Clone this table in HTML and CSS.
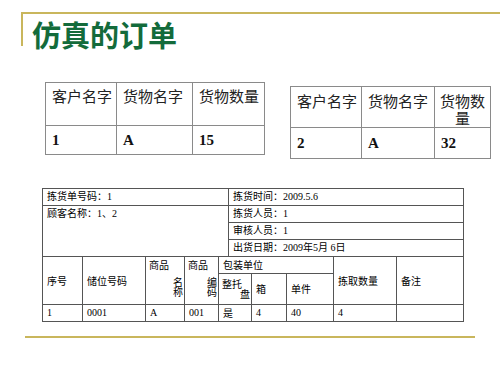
FILE: index.html
```html
<!DOCTYPE html>
<html lang="zh">
<head>
<meta charset="utf-8">
<link rel="stylesheet" href="styles.css">
</head>
<body>
<div class="slide">
  <header class="title-bar"><h1>仿真的订单</h1></header>

  <div class="orders">
    <table class="order order-1">
      <colgroup><col class="c1"><col class="c2"><col class="c3"></colgroup>
      <tr class="head"><td>客户名字</td><td>货物名字</td><td>货物数量</td></tr>
      <tr class="data"><td>1</td><td>A</td><td>15</td></tr>
    </table>
    <table class="order order-2">
      <colgroup><col class="c1"><col class="c2"><col class="c3"></colgroup>
      <tr class="head"><td>客户名字</td><td>货物名字</td><td class="wrap">货物数量</td></tr>
      <tr class="data"><td>2</td><td>A</td><td>32</td></tr>
    </table>
  </div>

  <div class="pick">
    <table class="pick-top">
      <colgroup><col class="pt1"><col class="pt2"></colgroup>
      <tr><td>拣货单号码：1</td><td>拣货时间：2009.5.6</td></tr>
      <tr><td rowspan="3" class="top">顾客名称：1、2</td><td>拣货人员：1</td></tr>
      <tr><td>审核人员：1</td></tr>
      <tr><td>出货日期：2009年5月 6日</td></tr>
    </table>
    <table class="pick-list">
      <colgroup>
        <col class="w1"><col class="w2"><col class="w3"><col class="w4"><col class="w5">
        <col class="w6"><col class="w7"><col class="w8"><col class="w9">
      </colgroup>
      <tr class="h1">
        <td rowspan="2">序号</td>
        <td rowspan="2">储位号码</td>
        <td rowspan="2" class="stack"><div class="lead">商品</div><div class="r">名</div><div class="r">称</div></td>
        <td rowspan="2" class="stack"><div class="lead">商品</div><div class="r">编</div><div class="r">码</div></td>
        <td colspan="3" class="top">包装单位</td>
        <td rowspan="2">拣取数量</td>
        <td rowspan="2">备注</td>
      </tr>
      <tr class="h2">
        <td class="stack tray"><div>整托</div><div class="r">盘</div></td>
        <td>箱</td>
        <td>单件</td>
      </tr>
      <tr class="row">
        <td>1</td><td>0001</td><td>A</td><td>001</td><td class="cjk">是</td><td>4</td><td>40</td><td>4</td><td></td>
      </tr>
    </table>
  </div>

  <div class="foot-line"></div>
</div>
</body>
</html>
```

FILE: styles.css
```css
html, body {
  margin: 0;
  padding: 0;
  background: #ffffff;
}

.slide {
  width: 500px;
  height: 375px;
  overflow: hidden;
  font-family: "Liberation Serif", "Noto Sans CJK SC", serif;
  color: #1a1a1a;
}

.title-bar {
  margin: 12px 0 0 21px;
  height: 32px;
  border-top: 2px solid #c9b65c;
  border-left: 2px solid #c9b65c;
}

.title-bar h1 {
  margin: 0;
  padding: 5px 0 0 9px;
  font-family: "Noto Sans CJK SC", sans-serif;
  font-size: 29px;
  line-height: 30px;
  font-weight: 700;
  color: #136b3b;
}

.orders {
  display: flex;
  align-items: flex-start;
  margin-top: 36px;
}

.order {
  border-collapse: collapse;
  table-layout: fixed;
}

.order td {
  border: 1px solid #8a8a8a;
  padding: 0 0 0 6px;
  font-size: 15px;
  line-height: 17px;
}

.order .head td {
  vertical-align: top;
  padding-top: 4px;
  font-family: "Noto Sans CJK SC", sans-serif;
  font-weight: 400;
  color: #222;
}

.order .data td {
  font-weight: 700;
  vertical-align: middle;
  color: #111;
}

.order-1 {
  margin-left: 45px;
  width: 219px;
}
.order-1 .head td { height: 38px; }
.order-1 .data td { height: 28px; }
.order-1 .c1 { width: 71px; }
.order-1 .c2 { width: 76px; }
.order-1 .c3 { width: 72px; }

.order-2 {
  margin: 4px 0 0 25px;
  width: 200px;
}
.order-2 .head td { height: 35px; padding-top: 5px; }
.order-2 .data td { height: 30px; }
.order-2 .c1 { width: 71px; }
.order-2 .c2 { width: 73px; }
.order-2 .c3 { width: 56px; }
.order-2 .head td.wrap {
  text-align: center;
  padding: 5px 2px 0 2px;
}

.pick {
  margin: 29px 0 0 42px;
  width: 421px;
  font-size: 10px;
  line-height: 12px;
  font-family: "Liberation Serif", "Noto Sans CJK SC", serif;
  color: #000;
}

.pick table {
  border-collapse: collapse;
  table-layout: fixed;
  width: 421px;
}

.pick td {
  border: 1px solid #555;
  padding: 0 0 0 4px;
  vertical-align: middle;
  overflow: hidden;
  white-space: nowrap;
}

.pick td.top { vertical-align: top; padding-top: 2px; }

.pick-top .pt1 { width: 186px; }
.pick-top .pt2 { width: 235px; }
.pick-top tr td { height: 16px; }

.pick-list { margin-top: -1px; }
.pick-list .w1 { width: 40px; }
.pick-list .w2 { width: 63px; }
.pick-list .w3 { width: 39px; }
.pick-list .w4 { width: 34px; }
.pick-list .w5 { width: 33px; }
.pick-list .w6 { width: 35px; }
.pick-list .w7 { width: 47px; }
.pick-list .w8 { width: 63px; }
.pick-list .w9 { width: 67px; }

.pick-list .h1 td,
.pick-list .h2 td,
.pick-list td.cjk {
  font-family: "Noto Sans CJK SC", sans-serif;
}

.pick-list .h1 td { height: 16px; }
.pick-list .h1 td.top { height: 14px; }
.pick-list .h2 td { height: 30px; }
.pick-list .h2 td.tray { height: 26px; }
.pick-list .row td { height: 16px; }

.pick-list td.stack {
  padding: 2px 1px 0 3px;
  vertical-align: top;
}
.pick-list td.stack .r {
  text-align: right;
  line-height: 10px;
}
.pick-list td.stack .lead { margin-bottom: 6px; }
.pick-list td.tray { padding-top: 4px; }
.pick-list td.tray div { line-height: 11px; }

.foot-line {
  margin: 14px 0 0 25px;
  width: 450px;
  height: 2px;
  background: #c9b65c;
}
```
